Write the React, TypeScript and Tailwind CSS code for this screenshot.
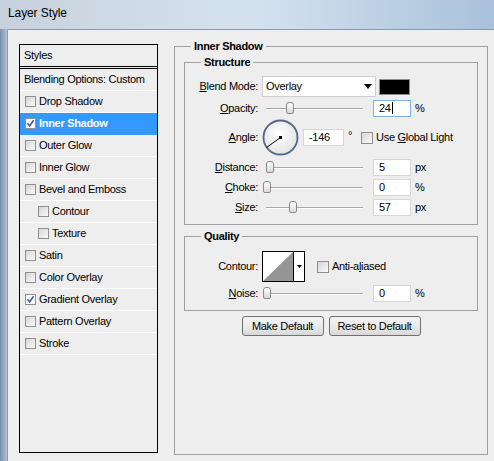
import React from 'react';

const Checkbox: React.FC<{ checked?: boolean; small?: boolean }> = ({ checked, small }) => (
  <span
    className={`flex shrink-0 items-center justify-center border border-[#8f8f8f] ${
      checked ? 'bg-white' : 'bg-linear-to-br from-[#d6d6d6] to-[#fafafa]'
    } ${small ? 'w-[11px] h-[11px]' : 'w-[12px] h-[12px]'}`}
  >
    {checked && (
      <svg width="9" height="9" viewBox="0 0 9 9">
        <path d="M1.5 4.2 L3.6 7 L7.6 1.3" fill="none" stroke="#3b5597" strokeWidth="1.5" />
      </svg>
    )}
  </span>
);

const ListRow: React.FC<{
  label: string;
  check?: boolean;
  checked?: boolean;
  indent?: boolean;
  selected?: boolean;
}> = ({ label, check = true, checked, indent, selected }) => (
  <div
    className={`h-[22px] flex items-center border-b gap-[3px] ${
      selected ? 'bg-[#3399ff] border-[#3399ff] text-white font-bold' : 'border-white'
    } ${check ? (indent ? 'pl-[18px]' : 'pl-[5px]') : 'pl-[4px]'}`}
  >
    {check && <Checkbox small checked={checked} />}
    <span>{label}</span>
  </div>
);

const Label: React.FC<{ children: React.ReactNode }> = ({ children }) => (
  <div className="w-[73px] shrink-0 text-right">{children}</div>
);

const U: React.FC<{ children: React.ReactNode }> = ({ children }) => (
  <span className="underline underline-offset-[1px]">{children}</span>
);

const Slider: React.FC<{ pos: number }> = ({ pos }) => (
  <div className="relative ml-[4px] w-[105px] h-[20px] shrink-0">
    <div className="absolute left-[4px] right-[4px] top-[10px] h-[2px] border-t border-[#a8a8a8] border-b border-b-white" />
    <div
      className="absolute top-[4px] w-[8px] h-[12px] rounded-t-[3px] rounded-b-[2px] border border-[#8a8a8a] bg-linear-to-b from-white to-[#d9d9d9]"
      style={{ left: pos }}
    />
  </div>
);

const NumBox: React.FC<{ value: string; focus?: boolean; width?: string; ml?: string }> = ({
  value,
  focus,
  width = 'w-[38px]',
  ml = 'ml-[6px]',
}) => (
  <div
    className={`${width} ${ml} h-[17px] shrink-0 bg-white border ${
      focus ? 'border-[#7eb4ea]' : 'border-[#d6d6d6]'
    } pl-[5px] flex items-center`}
  >
    {value}
    {focus && <span className="w-px h-[12px] bg-black ml-[1px]" />}
  </div>
);

const SliderRow: React.FC<{ label: React.ReactNode; pos: number; value: string; unit: string; focus?: boolean }> = ({
  label,
  pos,
  value,
  unit,
  focus,
}) => (
  <div className="h-[20px] flex items-center">
    <Label>{label}</Label>
    <Slider pos={pos} />
    <NumBox value={value} focus={focus} />
    <span className="ml-[4px]">{unit}</span>
  </div>
);

export default function App() {
  return (
    <div className="w-[494px] h-[461px] overflow-hidden flex flex-col bg-linear-to-r from-[#c7d1db] via-[#d5e3ef] to-[#a9c1da] font-['Liberation_Sans',Arial,sans-serif] text-black text-[11px] leading-[13px] tracking-[-0.3px]">
      <div className="h-[29px] shrink-0 pl-[8px] pt-[6px] text-[12px] leading-[15px] tracking-[-0.1px]">Layer Style</div>
      <div className="flex flex-1 min-h-0">
        <div className="w-[7px] shrink-0 bg-linear-to-r from-[#7890ad] to-[#b3c3d5]" />
        <div className="flex-1 bg-[#eeeeee] border-l border-t border-[#8d9aab] flex items-start pl-[11px]">
          {/* styles list */}
          <div className="mt-[14px] w-[139px] h-[409px] shrink-0 border border-black">
            <div className="h-[22px] border-b border-black pl-[4px] flex items-center">Styles</div>
            <div className="mt-[1px] border-t border-black">
              <ListRow label="Blending Options: Custom" check={false} />
              <ListRow label="Drop Shadow" />
              <ListRow label="Inner Shadow" checked selected />
              <ListRow label="Outer Glow" />
              <ListRow label="Inner Glow" />
              <ListRow label="Bevel and Emboss" />
              <ListRow label="Contour" indent />
              <ListRow label="Texture" indent />
              <ListRow label="Satin" />
              <ListRow label="Color Overlay" />
              <ListRow label="Gradient Overlay" checked />
              <ListRow label="Pattern Overlay" />
              <ListRow label="Stroke" />
            </div>
          </div>

          {/* settings */}
          <fieldset className="mt-[10px] ml-[16px] w-[314px] h-[415px] shrink-0 border border-[#a0a0a0] pl-[9px] pr-[9px] pt-[4px]">
            <legend className="ml-[7px] px-[3px] font-bold leading-[12px]">Inner Shadow</legend>

            <fieldset className="w-full h-[169px] border border-[#a0a0a0]">
              <legend className="ml-[16px] px-[3px] font-bold leading-[12px]">Structure</legend>

              <div className="mt-[8px] h-[21px] flex items-center">
                <Label>
                  <U>B</U>lend Mode:
                </Label>
                <div className="ml-[4px] w-[114px] h-[21px] shrink-0 bg-white border border-[#cfcfcf] flex items-center justify-between pl-[3px] pr-[3px]">
                  <span>Overlay</span>
                  <svg width="8" height="5" viewBox="0 0 8 5">
                    <path d="M0 0 H8 L4 5 Z" fill="#000" />
                  </svg>
                </div>
                <div className="ml-[3px] w-[31px] h-[16px] shrink-0 bg-black border border-[#8c8c8c]" />
              </div>

              <div className="mt-[1px]">
                <SliderRow
                  label={
                    <>
                      <U>O</U>pacity:
                    </>
                  }
                  pos={24}
                  value="24"
                  unit="%"
                  focus
                />
              </div>

              <div className="mt-[1px] h-[37px] flex items-center">
                <Label>
                  <U>A</U>ngle:
                </Label>
                <svg className="ml-[4px] shrink-0" width="37" height="37" viewBox="0 0 37 37">
                  <defs>
                    <radialGradient id="dialFill" cx="45%" cy="40%" r="65%">
                      <stop offset="0" stopColor="#ffffff" />
                      <stop offset="1" stopColor="#e2e2e2" />
                    </radialGradient>
                  </defs>
                  <circle cx="18.5" cy="18.5" r="17" fill="url(#dialFill)" stroke="#56678c" strokeWidth="1.8" />
                  <line x1="18.5" y1="18.5" x2="4.5" y2="28.5" stroke="#000" strokeWidth="1" />
                  <rect x="17" y="17" width="3" height="3" fill="#000" />
                </svg>
                <NumBox value="-146" width="w-[41px]" ml="ml-[4px]" />
                <span className="ml-[4px] -mt-[4px]">°</span>
                <span className="ml-[9px]">
                  <Checkbox />
                </span>
                <span className="ml-[3px]">
                  Use <U>G</U>lobal Light
                </span>
              </div>

              <div className="mt-[1px]">
                <SliderRow
                  label={
                    <>
                      <U>D</U>istance:
                    </>
                  }
                  pos={4}
                  value="5"
                  unit="px"
                />
                <SliderRow
                  label={
                    <>
                      <U>C</U>hoke:
                    </>
                  }
                  pos={1}
                  value="0"
                  unit="%"
                />
                <SliderRow
                  label={
                    <>
                      <U>S</U>ize:
                    </>
                  }
                  pos={27}
                  value="57"
                  unit="px"
                />
              </div>
            </fieldset>

            <fieldset className="mt-[5px] w-full h-[81px] border border-[#a0a0a0]">
              <legend className="ml-[16px] px-[3px] font-bold leading-[12px]">Quality</legend>

              <div className="mt-[9px] h-[31px] flex items-center">
                <Label>Contour:</Label>
                <div className="ml-[4px] w-[43px] h-[31px] shrink-0 flex border border-black bg-white">
                  <svg width="30" height="29" viewBox="0 0 30 29" className="shrink-0">
                    <path d="M0 29 L30 0 L30 29 Z" fill="#959595" />
                  </svg>
                  <div className="flex-1 border-l border-black flex items-center justify-center">
                    <svg width="5" height="3" viewBox="0 0 5 3">
                      <path d="M0 0 H5 L2.5 3 Z" fill="#000" />
                    </svg>
                  </div>
                </div>
                <span className="ml-[12px]">
                  <Checkbox />
                </span>
                <span className="ml-[3px]">
                  Anti-a<U>l</U>iased
                </span>
              </div>

              <div className="mt-[1px]">
                <SliderRow
                  label={
                    <>
                      <U>N</U>oise:
                    </>
                  }
                  pos={1}
                  value="0"
                  unit="%"
                />
              </div>
            </fieldset>

            <div className="mt-[5px] flex justify-center gap-[5px]">
              <button className="w-[82px] h-[20px] rounded-[3px] border border-[#707070] bg-linear-to-b from-[#f3f3f3] via-[#ebebeb] to-[#d8d8d8]">
                Make Default
              </button>
              <button className="w-[92px] h-[20px] rounded-[3px] border border-[#707070] bg-linear-to-b from-[#f3f3f3] via-[#ebebeb] to-[#d8d8d8]">
                Reset to Default
              </button>
            </div>
          </fieldset>
        </div>
      </div>
    </div>
  );
}
